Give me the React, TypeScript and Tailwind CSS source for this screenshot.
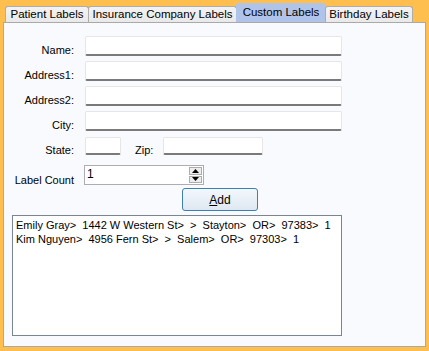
import React from "react";

const font = { fontFamily: '"Liberation Sans", Arial, sans-serif' };

const tabs = [
  { label: "Patient Labels", w: "w-[84px]" },
  { label: "Insurance Company Labels", w: "w-[149px]" },
  { label: "Custom Labels", w: "w-[90px]", active: true },
  { label: "Birthday Labels", w: "w-[88px]" },
];

const rows = [
  "Emily Gray>  1442 W Western St>  >  Stayton>  OR>  97383>  1",
  "Kim Nguyen>  4956 Fern St>  >  Salem>  OR>  97303>  1",
];

function TextBox({ className = "" }: { className?: string }) {
  return (
    <div
      className={`bg-white border border-[#e6e6e6] border-b-[2px] border-b-[#7a7a7a] rounded-[2px] ${className}`}
    />
  );
}

// labels sit a few px below the box centre, like the WinForms original
function Label({ children, pt = "pt-[8px]" }: { children: React.ReactNode; pt?: string }) {
  return (
    <div className={`w-[70px] shrink-0 text-right text-[11px] text-black leading-[12px] ${pt}`}>
      {children}
    </div>
  );
}

export default function App() {
  return (
    <div
      className="w-[429px] h-[351px] bg-[#ffbf4f] pt-[3px] px-[3px] pb-[4px] flex flex-col"
      style={font}
    >
      {/* tab strip */}
      <div className="flex items-end h-[19px] pl-[2px] relative z-10">
        {tabs.map((t, i) => (
          <div
            key={i}
            className={`${t.w} -mr-px flex items-center justify-center text-[11.5px] text-black border border-b-0 rounded-t-[3px] ${
              t.active
                ? "h-[19px] bg-[#b0c4e9] border-[#b0c4e9] pb-[1px]"
                : "h-[16px] bg-gradient-to-b from-[#f3f3f3] to-[#e9e9e9] border-[#adadad]"
            }`}
          >
            {t.label}
          </div>
        ))}
      </div>

      {/* panel */}
      <div className="flex-1 bg-[#f9fafe] border border-[#a9a9a9] flex flex-col pt-[13px]">
        <div className="flex flex-col gap-[5px]">
          {["Name:", "Address1:", "Address2:", "City:"].map((l) => (
            <div key={l} className="flex items-start gap-[11px] h-[20px]">
              <Label>{l}</Label>
              <TextBox className="w-[257px] h-[20px]" />
            </div>
          ))}
        </div>

        <div className="flex items-start mt-[6px] h-[18px]">
          <Label pt="pt-[7px]">State:</Label>
          <TextBox className="w-[36px] h-[18px] ml-[11px]" />
          <div className="text-[11px] leading-[12px] pt-[7px] ml-[14px]">Zip:</div>
          <TextBox className="w-[100px] h-[18px] ml-[10px]" />
        </div>

        <div className="flex items-start mt-[10px] h-[20px]">
          <Label pt="pt-[9px]">Label Count</Label>
          <div className="ml-[10px] w-[120px] h-[20px] bg-white border border-[#abadb3] flex">
            <div className="flex-1 text-[12px] leading-[17px] pl-[2px]">1</div>
            <div className="w-[15px] flex flex-col gap-px p-px">
              <div className="flex-1 border border-[#acacac] bg-[#ededed] flex items-center justify-center">
                <svg width="7" height="4" viewBox="0 0 7 4">
                  <path d="M0 4 L3.5 0 L7 4 Z" fill="#000" />
                </svg>
              </div>
              <div className="flex-1 border border-[#acacac] bg-[#ededed] flex items-center justify-center">
                <svg width="7" height="4" viewBox="0 0 7 4">
                  <path d="M0 0 L3.5 4 L7 0 Z" fill="#000" />
                </svg>
              </div>
            </div>
          </div>
        </div>

        <div className="flex mt-[3px] pl-[178px]">
          <div className="w-[76px] h-[23px] rounded-[3px] border border-[#3c7fb1] bg-gradient-to-b from-[#f2f7fc] to-[#dfe8f1] flex items-center justify-center text-[12px]">
            <span>
              <span className="underline">A</span>dd
            </span>
          </div>
        </div>

        <div className="ml-[8px] mt-[4px] w-[330px] h-[121px] bg-white border border-[#7a8594] pt-[2px] pl-[3px]">
          {rows.map((r, i) => (
            <div key={i} className="text-[11px] leading-[14px] whitespace-pre text-black">
              {r}
            </div>
          ))}
        </div>
      </div>
    </div>
  );
}
